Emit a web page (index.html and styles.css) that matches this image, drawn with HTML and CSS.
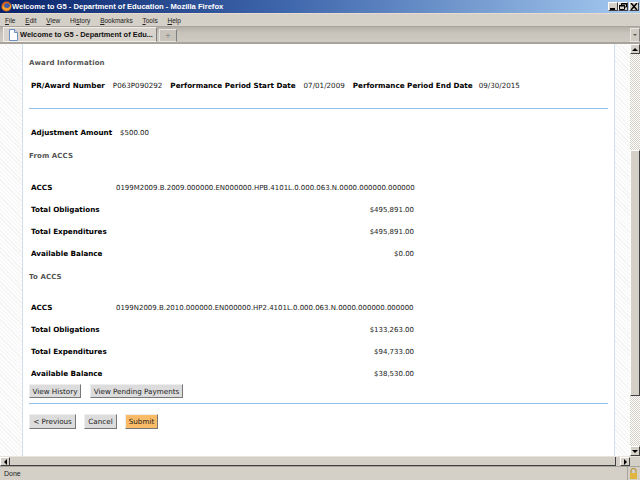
FILE: index.html
```html
<!DOCTYPE html>
<html lang="en">
<head>
<meta charset="utf-8">
<title>Welcome to G5</title>
<link rel="stylesheet" href="styles.css">
</head>
<body>
<div class="window">
  <header class="titlebar">
    <div class="title-left">
      <svg class="fx" width="11" height="11" viewBox="0 0 11 11"><circle cx="5.5" cy="5.5" r="5" fill="#d9641a"/><circle cx="6" cy="5" r="2.8" fill="#3a5fa8"/><path d="M1 7c2 3 6 3.500 8 1 1-1 1.500-3 1-5-.5 2-2 4-4 4S3 6 2.500 4z" fill="#f0a030"/></svg>
      <span>Welcome to G5 - Department of Education - Mozilla Firefox</span>
    </div>
    <div class="winbtns">
      <span class="winbtn"><svg width="8" height="7" viewBox="0 0 8 7"><rect x="1" y="5" width="5" height="2" fill="#000"/></svg></span>
      <span class="winbtn"><svg width="8" height="7" viewBox="0 0 8 7" fill="none" stroke="#000"><path d="M2.500 2V.5h5v3.500H6M.5 2.500h5v4h-5z"/><path d="M2 1h6M0 3h6" /></svg></span>
      <span class="winbtn close"><svg width="8" height="7" viewBox="0 0 8 7" stroke="#000" stroke-width="1.500"><path d="M1 0l6 7M7 0L1 7"/></svg></span>
    </div>
  </header>
  <nav class="menubar">
    <span><u>F</u>ile</span><span><u>E</u>dit</span><span><u>V</u>iew</span><span>Hi<u>s</u>tory</span><span><u>B</u>ookmarks</span><span><u>T</u>ools</span><span><u>H</u>elp</span>
  </nav>
  <div class="tabbar">
    <div class="tab">
      <svg width="10" height="12" viewBox="0 0 10 12"><path d="M1.500.5h5l3 3v8h-8z" fill="#fff" stroke="#6f8fc0"/><path d="M6.500.5v3h3" fill="#cfe0f5" stroke="#6f8fc0"/></svg>
      <span>Welcome to G5 - Department of Edu...</span>
    </div>
    <div class="newtab">+</div>
    <div class="tabspacer"></div>
    <div class="tablist"><i class="arr down small"></i></div>
  </div>
  <div class="viewport">
    <div class="viewrow">
      <div class="pagearea">
        <main class="content">
          <h2 class="section first">Award Information</h2>
          <div class="award">
            <b>PR/Award Number</b><span>P063P090292</span>
            <b>Performance Period Start Date</b><span>07/01/2009</span>
            <b>Performance Period End Date</b><span>09/30/2015</span>
          </div>
          <hr class="rule rule-a">
          <div class="adjust"><b>Adjustment Amount</b><span>$500.00</span></div>
          <h2 class="section from">From ACCS</h2>
          <table class="accs">
            <tr><th>ACCS</th><td>0199M2009.B.2009.000000.EN000000.HPB.4101L.0.000.063.N.0000.000000.000000</td></tr>
            <tr><th>Total Obligations</th><td class="num">$495,891.00</td></tr>
            <tr><th>Total Expenditures</th><td class="num">$495,891.00</td></tr>
            <tr><th>Available Balance</th><td class="num">$0.00</td></tr>
          </table>
          <h2 class="section to">To ACCS</h2>
          <table class="accs">
            <tr><th>ACCS</th><td>0199N2009.B.2010.000000.EN000000.HP2.4101L.0.000.063.N.0000.000000.000000</td></tr>
            <tr><th>Total Obligations</th><td class="num">$133,263.00</td></tr>
            <tr><th>Total Expenditures</th><td class="num">$94,733.00</td></tr>
            <tr><th>Available Balance</th><td class="num">$38,530.00</td></tr>
          </table>
          <div class="btnrow upper"><button>View History</button><button>View Pending Payments</button></div>
          <hr class="rule rule-b">
          <div class="btnrow lower"><button>&lt; Previous</button><button>Cancel</button><button class="primary">Submit</button></div>
        </main>
      </div>
      <div class="vscroll">
        <span class="sbtn"><i class="arr up"></i></span>
        <span class="vtrack"><span class="vthumb"></span></span>
        <span class="sbtn"><i class="arr down"></i></span>
      </div>
    </div>
    <div class="hscroll">
      <span class="sbtn"><i class="arr left"></i></span>
      <span class="htrack"></span>
      <span class="hgap"></span>
      <span class="sbtn"><i class="arr right"></i></span>
      <span class="corner"></span>
    </div>
  </div>
  <footer class="statusbar">
    <span class="status-text">Done</span>
    <span class="lock"><svg width="9" height="11" viewBox="0 0 9 11"><path d="M2 5V3a2.500 2.500 0 0 1 5 0v2" fill="none" stroke="#b99a3a" stroke-width="1.200"/><rect x="1" y="5" width="7" height="6" fill="#e2b53f"/></svg></span>
  </footer>
</div>
</body>
</html>
```
FILE: styles.css
```css
* { box-sizing: border-box; }
html, body { margin: 0; padding: 0; }
body { width: 640px; height: 480px; overflow: hidden; font-family: "DejaVu Sans", sans-serif; font-size: 6.98px; color: #000; }
.window { width: 640px; height: 480px; display: flex; flex-direction: column; background: #d4d0c8; }
b { font-size: 7.2px; }

.titlebar { height: 13px; flex: none; display: flex; justify-content: space-between; align-items: center; background: linear-gradient(90deg, #0a246a 0%, #3f67ac 45%, #a6caf0 100%); padding: 0 1px 1px 1px; }
.title-left { display: flex; align-items: center; gap: 0; color: #fff; font-family: "Liberation Sans", sans-serif; font-weight: bold; font-size: 7.6px; white-space: nowrap; }
.winbtns { display: flex; align-items: center; }
.winbtn { width: 10px; height: 9px; display: flex; align-items: center; justify-content: center; background: #d4d0c8; border: 1px solid; border-color: #fff #404040 #404040 #fff; }
.winbtn svg { display: block; }
.winbtn.close { margin-left: 1px; }

.menubar { height: 14px; flex: none; display: flex; align-items: center; gap: 9.8px; padding-left: 5px; font-family: "Liberation Sans", sans-serif; font-size: 6.5px; color: #222; border-top: 1px solid #e8dccf; border-bottom: 1px solid #a8a49c; }

.tabbar { height: 17px; flex: none; display: flex; align-items: flex-end; background: linear-gradient(#b5b1a9, #c8c4bc 40%, #cfcbc3); border-bottom: 2px solid #a8a49c; padding-left: 3px; }
.tab { width: 154px; height: 15px; display: flex; align-items: center; gap: 2px; padding-left: 4px; background: #d8d4cc; border: 1px solid #f0eee8; border-right-color: #808080; font-family: "Liberation Sans", sans-serif; font-weight: bold; font-size: 7.45px; color: #111; white-space: nowrap; overflow: hidden; }
.newtab { width: 18px; height: 13px; margin-left: 2px; display: flex; align-items: center; justify-content: center; color: #777; font-size: 7px; background: #c8c4bc; border: 1px solid #e8e6e0; border-right-color: #808080; }
.tabspacer { flex: 1; }
.tablist { width: 10px; height: 14px; display: flex; align-items: center; justify-content: center; border: 1px solid #e8e6e0; border-right-color: #808080; background: #d0ccc4; }

.viewport { flex: 1; min-height: 0; display: flex; flex-direction: column; }
.viewrow { flex: 1; min-height: 0; display: flex; }
.pagearea { flex: 1; min-width: 0; display: flex; padding: 0 15px 0 22px; background: repeating-linear-gradient(45deg, #f4f4f2 0 1px, #fdfdfd 1px 3px); overflow: hidden; }
.content { flex: 1; min-width: 0; background: #fff; border-left: 1px solid #cfe0f2; border-right: 1px solid #cfe0f2; padding: 14px 6px 0 6px; }

.section { margin: 0; font-size: 7px; line-height: 10px; font-weight: bold; color: #555; letter-spacing: .1px; }
.award { display: flex; margin: 13px 0 0 2px; line-height: 10px; white-space: nowrap; }
.award b { margin-right: 8px; }
.award b:nth-of-type(3) { margin-right: 6px; }
.award span { margin-right: 8px; color: #222; font-size: 7.15px; }
.rule { border: 0; height: 1px; margin: 0; background: #8fc0ea; }
.rule-a { margin-top: 17px; }
.adjust { display: flex; gap: 8px; margin: 19px 0 0 2px; line-height: 10px; }
.adjust span { color: #222; }
.from { margin-top: 13px; }
.to { margin-top: 8px; }
.accs { border-collapse: collapse; width: 383px; margin: 14px 0 0 2px; table-layout: fixed; }
.from + .accs { margin-top: 15px; }
.accs tr { height: 22px; }
.accs th { width: 85px; padding: 0; text-align: left; font-weight: bold; font-size: 7.2px; }
.accs td { padding: 1px 0 0; color: #222; white-space: nowrap; }
.accs .num { text-align: right; }

.btnrow { display: flex; }
.btnrow button { font-family: "DejaVu Sans", sans-serif; font-size: 7.2px; color: #222; background: #dcdcdc; border: 1px solid; border-color: #eee #777 #777 #eee; padding: 0; height: 14px; white-space: nowrap; }
.upper { margin-top: 0; gap: 9px; }
.upper button:nth-child(1) { width: 52px; }
.upper button:nth-child(2) { width: 93px; }
.rule-b { margin-top: 5px; }
.lower { margin-top: 10px; gap: 8px; }
.lower button { height: 15px; }
.lower button:nth-child(1) { width: 47px; }
.lower button:nth-child(2) { width: 33px; }
.lower button:nth-child(3) { width: 33px; }
.btnrow .primary { background: #f9bb66; }

.hscroll { height: 10px; flex: none; display: flex; background: #d4d0c8; border-top: 1px solid #e8e4dc; }
.htrack { flex: 1; border-bottom: 1px solid #404040; border-right: 1px solid #404040; }
.hgap { width: 4px; flex: none; }
.corner { width: 10px; flex: none; }
.sbtn { width: 10px; height: 10px; flex: none; display: flex; align-items: center; justify-content: center; background: #d4d0c8; border: 1px solid; border-color: #fff #404040 #404040 #fff; }
.hscroll .sbtn { height: 9px; }
.arr { display: block; width: 0; height: 0; border: 3px solid transparent; }
.arr.up { border-top: 0; border-bottom-color: #000; }
.arr.down { border-bottom: 0; border-top-color: #000; }
.arr.left { border-left: 0; border-right-color: #000; }
.arr.right { border-right: 0; border-left-color: #000; }
.arr.small { border-width: 2px; border-bottom: 0; border-top-color: #555; }

.vscroll { width: 10px; flex: none; display: flex; flex-direction: column; background: repeating-conic-gradient(#fff 0 25%, #d4d0c8 0 50%) 0 0 / 2px 2px; }
.vtrack { flex: 1; display: flex; flex-direction: column; padding-top: 96px; }
.vthumb { height: 246px; background: #d4d0c8; border: 1px solid; border-color: #fff #404040 #404040 #fff; }

.statusbar { height: 14px; flex: none; display: flex; justify-content: space-between; align-items: center; padding-left: 4px; border-top: 1px solid #a8a49c; font-family: "Liberation Sans", sans-serif; font-size: 7px; color: #222; }
.lock { width: 12px; height: 13px; display: flex; align-items: center; justify-content: center; border-left: 1px solid #a8a49c; margin-right: 1px; }
```
